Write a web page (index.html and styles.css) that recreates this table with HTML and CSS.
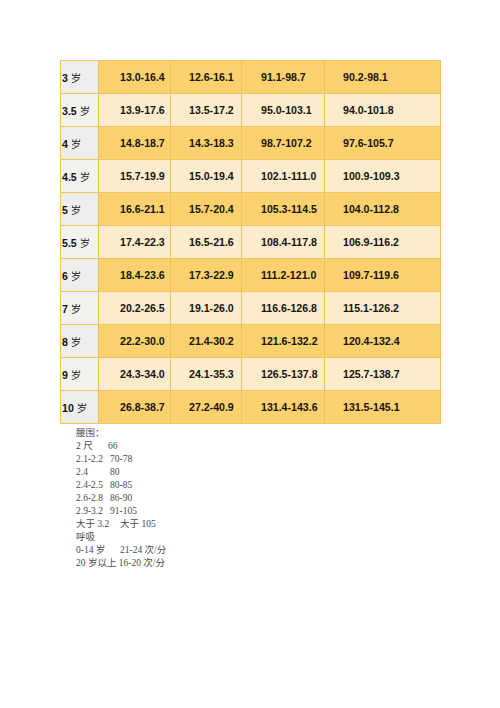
FILE: index.html
```html
<!DOCTYPE html>
<html lang="zh">
<head>
<meta charset="utf-8">
<link rel="stylesheet" href="styles.css">
</head>
<body>
<div class="page">
  <table class="grid">
    <colgroup>
      <col class="c1"><col class="c2"><col class="c3"><col class="c4"><col class="c5">
    </colgroup>
    <tr class="dark"><td class="age">3 <span class="cjk">岁</span></td><td class="p2">13.0-16.4</td><td class="p3">12.6-16.1</td><td class="p4">91.1-98.7</td><td class="p5">90.2-98.1</td></tr>
    <tr class="light"><td class="age">3.5 <span class="cjk">岁</span></td><td class="p2">13.9-17.6</td><td class="p3">13.5-17.2</td><td class="p4">95.0-103.1</td><td class="p5">94.0-101.8</td></tr>
    <tr class="dark"><td class="age">4 <span class="cjk">岁</span></td><td class="p2">14.8-18.7</td><td class="p3">14.3-18.3</td><td class="p4">98.7-107.2</td><td class="p5">97.6-105.7</td></tr>
    <tr class="light"><td class="age">4.5 <span class="cjk">岁</span></td><td class="p2">15.7-19.9</td><td class="p3">15.0-19.4</td><td class="p4">102.1-111.0</td><td class="p5">100.9-109.3</td></tr>
    <tr class="dark"><td class="age">5 <span class="cjk">岁</span></td><td class="p2">16.6-21.1</td><td class="p3">15.7-20.4</td><td class="p4">105.3-114.5</td><td class="p5">104.0-112.8</td></tr>
    <tr class="light"><td class="age">5.5 <span class="cjk">岁</span></td><td class="p2">17.4-22.3</td><td class="p3">16.5-21.6</td><td class="p4">108.4-117.8</td><td class="p5">106.9-116.2</td></tr>
    <tr class="dark"><td class="age">6 <span class="cjk">岁</span></td><td class="p2">18.4-23.6</td><td class="p3">17.3-22.9</td><td class="p4">111.2-121.0</td><td class="p5">109.7-119.6</td></tr>
    <tr class="light"><td class="age">7 <span class="cjk">岁</span></td><td class="p2">20.2-26.5</td><td class="p3">19.1-26.0</td><td class="p4">116.6-126.8</td><td class="p5">115.1-126.2</td></tr>
    <tr class="dark"><td class="age">8 <span class="cjk">岁</span></td><td class="p2">22.2-30.0</td><td class="p3">21.4-30.2</td><td class="p4">121.6-132.2</td><td class="p5">120.4-132.4</td></tr>
    <tr class="light"><td class="age">9 <span class="cjk">岁</span></td><td class="p2">24.3-34.0</td><td class="p3">24.1-35.3</td><td class="p4">126.5-137.8</td><td class="p5">125.7-138.7</td></tr>
    <tr class="dark"><td class="age">10 <span class="cjk">岁</span></td><td class="p2">26.8-38.7</td><td class="p3">27.2-40.9</td><td class="p4">131.4-143.6</td><td class="p5">131.5-145.1</td></tr>
  </table>
  <div class="notes">
    <div class="line">腰围：</div>
    <div class="line"><span class="k w32">2 尺</span><span>66</span></div>
    <div class="line"><span class="k w34">2.1-2.2</span><span>70-78</span></div>
    <div class="line"><span class="k w34">2.4</span><span>80</span></div>
    <div class="line"><span class="k w34">2.4-2.5</span><span>80-85</span></div>
    <div class="line"><span class="k w34">2.6-2.8</span><span>86-90</span></div>
    <div class="line"><span class="k w34">2.9-3.2</span><span>91-105</span></div>
    <div class="line"><span class="k w44">大于 3.2</span><span>大于 105</span></div>
    <div class="line">呼吸</div>
    <div class="line"><span class="k w44">0-14 岁</span><span>21-24 次/分</span></div>
    <div class="line">20 岁以上 16-20 次/分</div>
  </div>
</div>
</body>
</html>
```
FILE: styles.css
```css
html, body {
  margin: 0;
  padding: 0;
  background: #ffffff;
}
.page {
  padding: 60px 0 0 60px;
}
.grid {
  border-collapse: collapse;
  table-layout: fixed;
  width: 380px;
  font-family: "Liberation Sans", Arial, sans-serif;
  font-weight: bold;
  font-size: 10.6px;
  color: #161310;
  border: 1px solid #f3c76a;
}
.c1 { width: 38px; }
.c2 { width: 72px; }
.c3 { width: 71px; }
.c4 { width: 83px; }
.c5 { width: 116px; }
.grid tr {
  height: 33px;
}
.grid td {
  padding: 0;
  border-top: 1px solid #f3c462;
  border-bottom: 1px solid #f3c462;
  border-left: 1px solid #efc25c;
  border-right: 1px solid #efc25c;
  white-space: nowrap;
  vertical-align: middle;
}
.dark td { background: #fcd16e; }
.light td { background: #fdeccb; }
.grid td.age {
  background: #efeeec;
  padding-left: 1px;
}
.light td.age { background: #f4f2ee; }
.cjk {
  font-family: "Noto Sans CJK SC", sans-serif;
  font-weight: normal;
  font-size: 10.5px;
  color: #222;
}
.p2 { padding-left: 21px !important; }
.p3 { padding-left: 18px !important; }
.p4 { padding-left: 19px !important; }
.p5 { padding-left: 18px !important; }

.notes {
  padding: 3px 0 0 16px;
  font-family: "Liberation Serif", "Noto Sans CJK SC", serif;
  font-size: 9.5px;
  line-height: 13px;
  color: #4a4a4a;
}
.line {
  white-space: nowrap;
}
.k { display: inline-block; }
.w32 { width: 32px; }
.w34 { width: 34px; }
.w44 { width: 44px; }
```
